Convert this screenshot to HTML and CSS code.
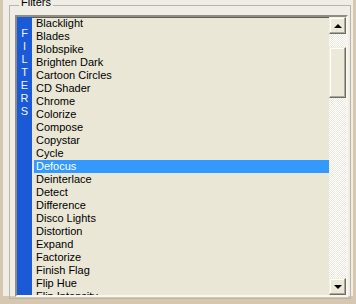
FILE: index.html
```html
<!DOCTYPE html>
<html lang="en">
<head>
    <meta charset="UTF-8">
    <title>Filters</title>
    <link rel="stylesheet" href="styles.css">
</head>
<body>
    <div class="window">
        <fieldset class="group">
            <legend>Filters</legend>

            <div class="listbox">
                <div class="side-strip">
                    <span>F</span><span>I</span><span>L</span><span>T</span><span>E</span><span>R</span><span>S</span>
                </div>

                <ul class="items">
                    <li>Blacklight</li>
                    <li>Blades</li>
                    <li>Blobspike</li>
                    <li>Brighten Dark</li>
                    <li>Cartoon Circles</li>
                    <li>CD Shader</li>
                    <li>Chrome</li>
                    <li>Colorize</li>
                    <li>Compose</li>
                    <li>Copystar</li>
                    <li>Cycle</li>
                    <li class="selected">Defocus</li>
                    <li>Deinterlace</li>
                    <li>Detect</li>
                    <li>Difference</li>
                    <li>Disco Lights</li>
                    <li>Distortion</li>
                    <li>Expand</li>
                    <li>Factorize</li>
                    <li>Finish Flag</li>
                    <li>Flip Hue</li>
                    <li>Flip Intensity</li>
                </ul>

                <div class="scrollbar">
                    <div class="scroll-btn"><span class="arrow-up"></span></div>
                    <div class="track">
                        <div class="thumb"></div>
                    </div>
                    <div class="scroll-btn"><span class="arrow-down"></span></div>
                </div>
            </div>
        </fieldset>
    </div>
</body>
</html>
```

FILE: styles.css
```css
* {
    margin: 0;
    padding: 0;
    box-sizing: border-box;
}

body {
    width: 356px;
    height: 304px;
    overflow: hidden;
    background-color: #d6c8b0;
    font-family: "Liberation Sans", Arial, sans-serif;
    font-size: 11px;
    color: #000;
}

/* 窗口主体 */
.window {
    margin: 2px 3px 0 3px;
    height: 297px;
    background-color: #efede5;
    padding: 0 0 0 6px;
}

.group {
    border: 1px solid #b9b6a6;
    margin-top: -3px;
    height: 300px;
    width: 342px;
    padding: 3px 0 0 5px;
}

.group legend {
    position: relative;
    top: -3px;
    margin-left: 4px;
    padding: 0 2px;
    line-height: 13px;
    background-color: #efede5;
}

/* 列表框 */
.listbox {
    display: flex;
    width: 333px;
    height: 282px;
    border-style: solid;
    border-width: 2px;
    border-color: #8f8c80 #f7f6f0 #f7f6f0 #8f8c80;
    box-shadow: inset 1px 1px 0 #5e5c54;
    background-color: #eae7d6;
}

.side-strip {
    width: 15px;
    flex-shrink: 0;
    background-color: #1a5ad6;
    color: #eef2ff;
    display: flex;
    flex-direction: column;
    align-items: center;
    padding-top: 10px;
}

.side-strip span {
    line-height: 13px;
}

.items {
    list-style: none;
    flex: 1;
    margin-left: 2px;
    overflow: hidden;
}

.items li {
    height: 13px;
    line-height: 13px;
    padding-left: 2px;
    white-space: nowrap;
}

.items li.selected {
    background-color: #3399ff;
    color: #fff;
}

/* 滚动条 */
.scrollbar {
    width: 17px;
    flex-shrink: 0;
    display: flex;
    flex-direction: column;
}

.scroll-btn {
    height: 17px;
    background-color: #ece9d8;
    border-style: solid;
    border-width: 1px;
    border-color: #f1efe2 #716f64 #716f64 #f1efe2;
    box-shadow: inset -1px -1px 0 #aca899, inset 1px 1px 0 #fff;
    display: flex;
    justify-content: center;
    align-items: center;
}

.arrow-up {
    width: 0;
    height: 0;
    border-left: 4px solid transparent;
    border-right: 4px solid transparent;
    border-bottom: 4px solid #000;
}

.arrow-down {
    width: 0;
    height: 0;
    border-left: 4px solid transparent;
    border-right: 4px solid transparent;
    border-top: 4px solid #000;
}

.track {
    flex: 1;
    background-color: #f6f5ef;
    background-image: repeating-conic-gradient(#fff 0 25%, #ebe9de 0 50%);
    background-size: 2px 2px;
    padding-top: 13px;
}

.thumb {
    height: 51px;
    background-color: #ece9d8;
    border-style: solid;
    border-width: 1px;
    border-color: #f1efe2 #716f64 #716f64 #f1efe2;
    box-shadow: inset -1px -1px 0 #aca899, inset 1px 1px 0 #fff;
}
```
